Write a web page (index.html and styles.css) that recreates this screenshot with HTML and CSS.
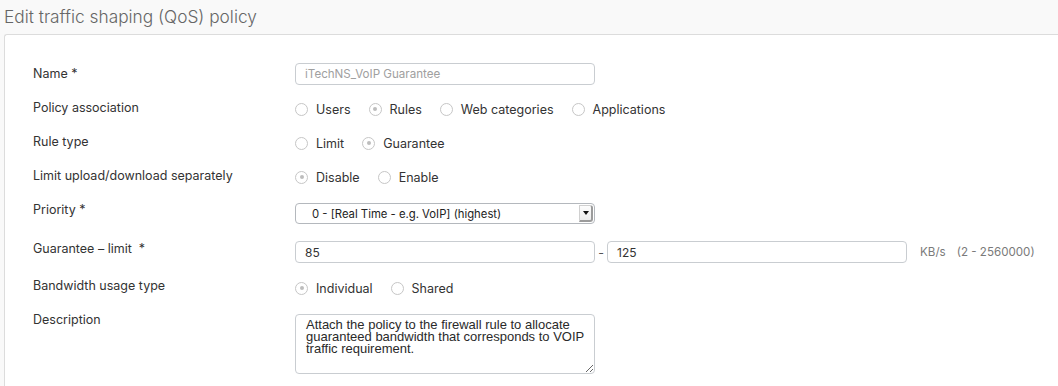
FILE: index.html
```html
<!DOCTYPE html>
<html lang="en">
<head>
    <meta charset="UTF-8">
    <title>Edit traffic shaping (QoS) policy</title>
    <link rel="stylesheet" href="styles.css">
</head>
<body>
    <h2 class="page-title">Edit traffic shaping (QoS) policy</h2>
    <div class="panel">
        <form class="qos-form">
            <div class="row row-name">
                <label class="form-label">Name *</label>
                <input type="text" class="form-control" value="iTechNS_VoIP Guarantee" disabled>
            </div>
            <div class="row row-assoc">
                <label class="form-label">Policy association</label>
                <div class="radios">
                    <span class="radio"><i></i>Users</span>
                    <span class="radio checked"><i></i>Rules</span>
                    <span class="radio"><i></i>Web categories</span>
                    <span class="radio"><i></i>Applications</span>
                </div>
            </div>
            <div class="row row-type">
                <label class="form-label">Rule type</label>
                <div class="radios">
                    <span class="radio"><i></i>Limit</span>
                    <span class="radio checked"><i></i>Guarantee</span>
                </div>
            </div>
            <div class="row row-separate">
                <label class="form-label">Limit upload/download separately</label>
                <div class="radios">
                    <span class="radio checked"><i></i>Disable</span>
                    <span class="radio"><i></i>Enable</span>
                </div>
            </div>
            <div class="row row-priority">
                <label class="form-label">Priority *</label>
                <div class="select">
                    <span>0 - [Real Time - e.g. VoIP] (highest)</span>
                    <b class="select-arrow"></b>
                </div>
            </div>
            <div class="row row-limit">
                <label class="form-label">Guarantee &ndash; limit &nbsp;*</label>
                <div class="range">
                    <input type="text" class="form-control" value="85">
                    <span class="dash">-</span>
                    <input type="text" class="form-control" value="125">
                    <span class="unit">KB/s</span>
                    <span class="unit">(2 - 2560000)</span>
                </div>
            </div>
            <div class="row row-bw">
                <label class="form-label">Bandwidth usage type</label>
                <div class="radios">
                    <span class="radio checked"><i></i>Individual</span>
                    <span class="radio"><i></i>Shared</span>
                </div>
            </div>
            <div class="row row-desc">
                <label class="form-label">Description</label>
                <textarea class="form-control">Attach the policy to the firewall rule to allocate guaranteed bandwidth that corresponds to VOIP traffic requirement.</textarea>
            </div>
        </form>
    </div>
</body>
</html>
```

FILE: styles.css
```css
body {
    background-color: #f9f9f9;
    font-family: Inter, "Noto Sans", sans-serif;
    font-size: 12.5px;
    color: #333;
    margin: 0;
    height: 100vh;
    display: flex;
    flex-direction: column;
    overflow: hidden;
}

.page-title {
    font-size: 17.3px;
    font-weight: 300;
    color: #666;
    margin: 0;
    padding: 6px 0 0 4px;
    height: 28px;
    box-sizing: border-box;
    line-height: 22px;
}

.panel {
    flex: 1;
    margin: 6px 0 0 4px;
    background: white;
    border: 1px solid #dcdcdc;
    border-right: none;
    border-bottom: none;
    border-radius: 3px 0 0 0;
}

.qos-form {
    padding: 21px 0 0 28px;
}

/* each row is centred on its control; labels are nudged up */
.row {
    display: flex;
    align-items: center;
}

.row-name { height: 35px; }
.row-assoc { height: 36px; }
.row-assoc .form-label { padding-bottom: 2px; }
.row-type { height: 32px; }
.row-type .form-label { padding-bottom: 2px; }
.row-separate { height: 36px; }
.row-separate .form-label { padding-bottom: 2px; }
.row-priority { height: 37px; }
.row-priority .form-label { padding-bottom: 7px; }
.row-limit { height: 40px; }
.row-limit .form-label { padding-bottom: 7px; }
.row-bw { height: 32px; }
.row-bw .form-label { padding-bottom: 4px; }

.row-desc {
    align-items: flex-start;
    padding-top: 10px;
}

.row-desc .form-label {
    margin-top: -2px;
}

.form-label {
    width: 262px;
    flex-shrink: 0;
    line-height: 16px;
    color: #333;
}

.form-control {
    box-sizing: border-box;
    width: 300px;
    height: 22px;
    border: 1px solid #c9cdd1;
    border-radius: 4px;
    padding: 0 9px;
    font-family: Inter, "Noto Sans", sans-serif;
    font-size: 12px;
    color: #333;
    background: white;
    margin: 0;
}

.form-control:disabled {
    color: #a0a0a0;
    font-size: 11.6px;
}

.radios {
    display: flex;
    gap: 18px;
}

.radio {
    display: flex;
    align-items: center;
    gap: 8px;
    color: #333;
}

.radio i {
    width: 11px;
    height: 11px;
    border: 1px solid #c6c6c6;
    border-radius: 50%;
    display: flex;
    align-items: center;
    justify-content: center;
    background: white;
}

.radio.checked i::after {
    content: "";
    width: 4px;
    height: 4px;
    border-radius: 50%;
    background: #bdbdbd;
}

.select {
    box-sizing: border-box;
    width: 300px;
    height: 21px;
    border: 1px solid #b4b8bd;
    border-radius: 4px;
    display: flex;
    align-items: stretch;
    padding-left: 16px;
    color: #222;
    font-size: 11.3px;
    overflow: hidden;
}

.select span {
    flex: 1;
    align-self: center;
}

.select-arrow {
    width: 11px;
    margin: 1px 1px 1px 0;
    border: 1px solid #d0d0d0;
    border-right: 2px solid #9b9b9b;
    border-bottom: 2px solid #9b9b9b;
    border-radius: 0 3px 3px 0;
    background: linear-gradient(#fdfdfd, #ececec);
    display: flex;
    align-items: center;
    justify-content: center;
}

.select-arrow::after {
    content: "";
    border-left: 3px solid transparent;
    border-right: 3px solid transparent;
    border-top: 4px solid #111;
}

.range {
    display: flex;
    align-items: center;
}

.dash {
    width: 12px;
    text-align: center;
    color: #555;
}

.unit {
    color: #7a7a7a;
    font-size: 11.6px;
    margin-left: 13px;
}

.range .unit:last-child {
    margin-left: 11px;
}

textarea.form-control {
    height: 60px;
    padding: 4px 2px 0 10px;
    font-family: "Liberation Sans", Arial, sans-serif;
    font-size: 13px;
    line-height: 12px;
    color: #2a2a2a;
    resize: vertical;
}
```
